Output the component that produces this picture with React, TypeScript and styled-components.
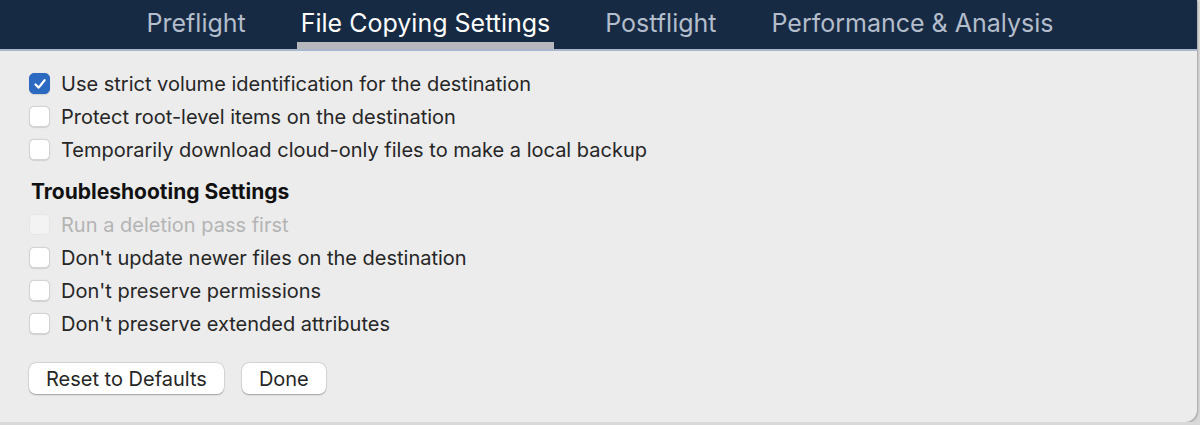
import React from "react";
import styled, { createGlobalStyle } from "styled-components";

const Global = createGlobalStyle`
  html, body { margin: 0; padding: 0; background: #d9d9d9; }
  body { font-family: "Inter", "Liberation Sans", sans-serif; -webkit-font-smoothing: antialiased; }
`;

const Window = styled.div`
  width: 1197px;
  height: 422px;
  background: #ececec;
  border-bottom-right-radius: 12px;
  box-shadow: 1px 1px 2px rgba(0,0,0,0.25);
  overflow: hidden;
  display: flex;
  flex-direction: column;
`;

const Header = styled.div`
  height: 51px;
  background: #172a43;
  border-bottom: 2px solid #a9b7cc;
  display: flex;
  justify-content: center;
  align-items: stretch;
  gap: 47px;
  width: 1200px;
  box-sizing: border-box;
`;

const Tab = styled.div<{ $active?: boolean }>`
  padding: 0 4px;
  display: flex;
  align-items: center;
  font-size: 25px;
  color: ${(p) => (p.$active ? "#ffffff" : "#b3bdcb")};
  border-bottom: 7px solid ${(p) => (p.$active ? "#b6b8bb" : "transparent")};
  padding-top: 3px;
  box-sizing: border-box;
`;

const Body = styled.div`
  padding: 16px 0 0 29px;
  display: flex;
  flex-direction: column;
`;

const Row = styled.label<{ $disabled?: boolean }>`
  display: flex;
  align-items: center;
  gap: 11px;
  height: 33px;
  font-size: 20px;
  color: ${(p) => (p.$disabled ? "#b4b4b4" : "#262626")};
`;

const Box = styled.span<{ $checked?: boolean; $disabled?: boolean }>`
  width: 21px;
  height: 21px;
  border-radius: 5px;
  box-sizing: border-box;
  display: flex;
  align-items: center;
  justify-content: center;
  background: ${(p) => (p.$checked ? "#2c6ac2" : p.$disabled ? "#f3f3f3" : "#ffffff")};
  border: 1px solid ${(p) => (p.$checked ? "#2c6ac2" : p.$disabled ? "#e6e6e6" : "#d3d3d3")};
  box-shadow: ${(p) => (p.$disabled ? "none" : "0 0.5px 1px rgba(0,0,0,0.12)")};
`;

const Heading = styled.div`
  font-size: 21px;
  font-weight: 700;
  color: #111;
  margin: 9px 0 0 2px;
  height: 33px;
  display: flex;
  align-items: center;
`;

const Buttons = styled.div`
  display: flex;
  gap: 18px;
  margin-top: 23px;
`;

const Button = styled.button`
  height: 31px;
  padding: 0 17px;
  font-family: inherit;
  font-size: 20px;
  color: #262626;
  background: #ffffff;
  border: none;
  border-radius: 7px;
  box-shadow: 0 0.5px 1.5px rgba(0,0,0,0.3), 0 0 0 0.5px rgba(0,0,0,0.08);
`;

const Check = () => (
  <svg width="14" height="14" viewBox="0 0 14 14">
    <path d="M2.5 7.5 L5.7 10.6 L11.6 3.2" fill="none" stroke="#fff" strokeWidth="2.2" strokeLinecap="round" strokeLinejoin="round" />
  </svg>
);

const Option = ({ label, checked, disabled }: { label: string; checked?: boolean; disabled?: boolean }) => (
  <Row $disabled={disabled}>
    <Box $checked={checked} $disabled={disabled}>{checked && <Check />}</Box>
    {label}
  </Row>
);

export default function App() {
  return (
    <>
      <Global />
      <Window>
        <Header>
          <Tab>Preflight</Tab>
          <Tab $active>File Copying Settings</Tab>
          <Tab>Postflight</Tab>
          <Tab>Performance &amp; Analysis</Tab>
        </Header>
        <Body>
          <Option label="Use strict volume identification for the destination" checked />
          <Option label="Protect root-level items on the destination" />
          <Option label="Temporarily download cloud-only files to make a local backup" />
          <Heading>Troubleshooting Settings</Heading>
          <Option label="Run a deletion pass first" disabled />
          <Option label="Don't update newer files on the destination" />
          <Option label="Don't preserve permissions" />
          <Option label="Don't preserve extended attributes" />
          <Buttons>
            <Button>Reset to Defaults</Button>
            <Button>Done</Button>
          </Buttons>
        </Body>
      </Window>
    </>
  );
}
